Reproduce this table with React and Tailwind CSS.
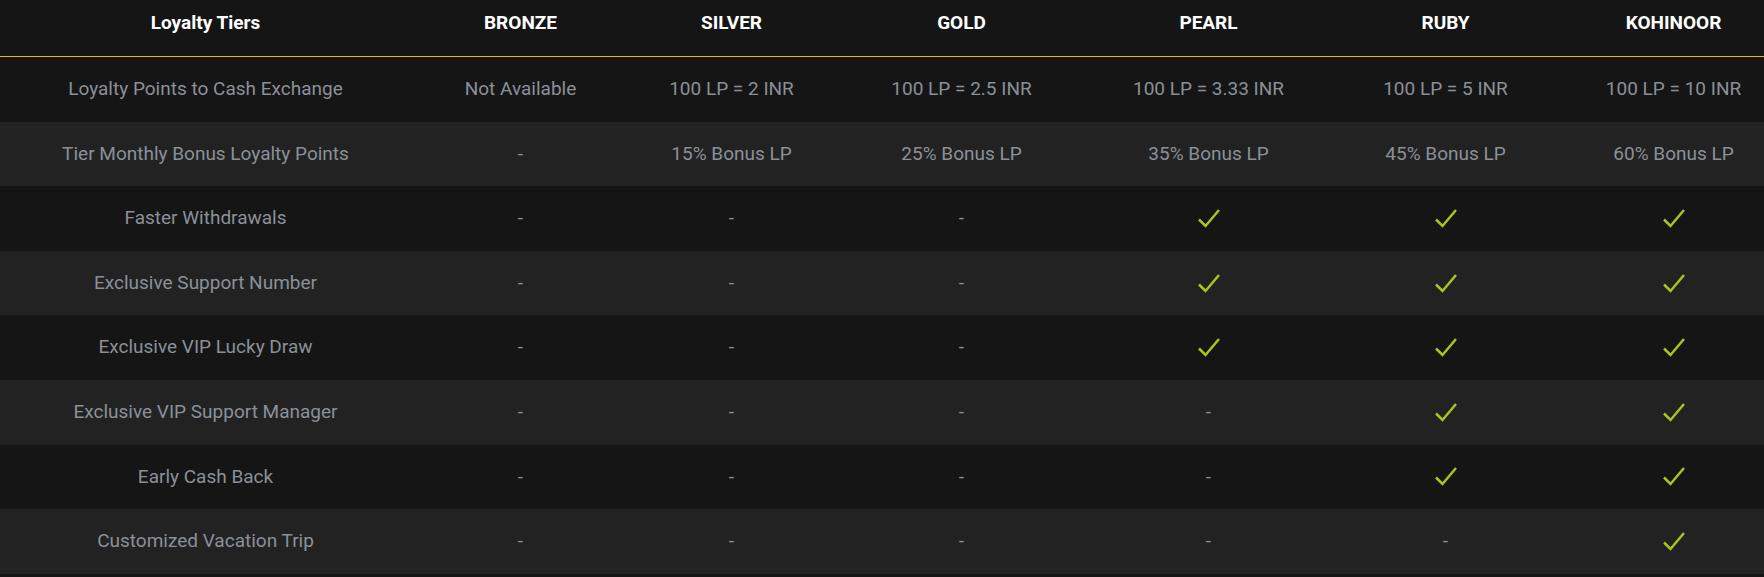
import React from "react";

const tiers = ["BRONZE", "SILVER", "GOLD", "PEARL", "RUBY", "KOHINOOR"];

const Y = "check";

const rows = [
  ["Loyalty Points to Cash Exchange", "Not Available", "100 LP = 2 INR", "100 LP = 2.5 INR", "100 LP = 3.33 INR", "100 LP = 5 INR", "100 LP = 10 INR"],
  ["Tier Monthly Bonus Loyalty Points", "-", "15% Bonus LP", "25% Bonus LP", "35% Bonus LP", "45% Bonus LP", "60% Bonus LP"],
  ["Faster Withdrawals", "-", "-", "-", Y, Y, Y],
  ["Exclusive Support Number", "-", "-", "-", Y, Y, Y],
  ["Exclusive VIP Lucky Draw", "-", "-", "-", Y, Y, Y],
  ["Exclusive VIP Support Manager", "-", "-", "-", "-", Y, Y],
  ["Early Cash Back", "-", "-", "-", "-", Y, Y],
  ["Customized Vacation Trip", "-", "-", "-", "-", "-", Y],
];

// column template (table is slightly wider than the viewport, last column clipped)
const cols = "grid grid-cols-[411px_219px_203px_257px_237px_237px_219px] w-[1783px]";

const Check = () => (
  <svg width="24" height="21" viewBox="0 0 24 21" className="inline-block">
    <path d="M2 11.5 L8.5 18 L22 2" fill="none" stroke="#a6c71b" strokeWidth="2.5" />
  </svg>
);

export default function App() {
  return (
    <div className="w-full h-[577px] overflow-hidden bg-[#151515]" style={{ fontFamily: "Roboto, sans-serif" }}>
      {/* Header */}
      <div className={`${cols} h-[57px] border-b border-[#f3b60c] pb-[9px]`}>
        <div className="flex items-center justify-center text-[19px] font-bold text-white">Loyalty Tiers</div>
        {tiers.map((t) => (
          <div key={t} className="flex items-center justify-center text-[19px] font-bold text-white">{t}</div>
        ))}
      </div>

      {/* Rows */}
      {rows.map((r, i) => (
        <div key={i} className={`${cols} h-[64.6px] ${i % 2 === 1 ? "bg-[#222222]" : "bg-[#151515]"}`}>
          {r.map((c, j) => (
            <div key={j} className="flex items-center justify-center text-[19px] text-[#8b9098]">
              {c === Y ? <Check /> : c}
            </div>
          ))}
        </div>
      ))}
    </div>
  );
}
